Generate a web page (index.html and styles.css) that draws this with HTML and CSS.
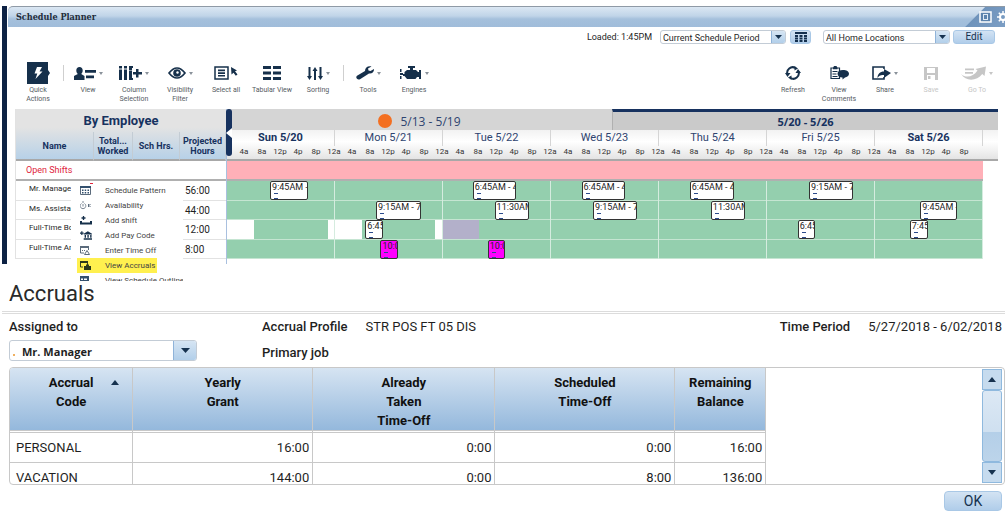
FILE: index.html
```html
<!DOCTYPE html>
<html lang="en">
<head>
<meta charset="utf-8">
<title>Schedule Planner</title>
<link rel="stylesheet" href="styles.css">
</head>
<body>
<section class="planner">
  <header class="titlebar">
    <h1 class="titlebar-text">Schedule Planner</h1>
    <div class="titlebar-tools">
      <button class="tool-btn" aria-label="Maximize"><svg width="13" height="12" viewBox="0 0 13 12"><rect x="1" y="1" width="11" height="10" fill="#5c83ad" stroke="#fff" stroke-width="1.5"/><rect x="4.5" y="3.5" width="4" height="5" fill="none" stroke="#dfeaf5"/></svg></button>
      <button class="tool-btn" aria-label="Settings"><svg width="12" height="12" viewBox="0 0 12 12"><circle cx="6" cy="6" r="3" fill="none" stroke="#fff" stroke-width="2"/><path d="M6 0v3M6 9v3M0 6h3M9 6h3M1.8 1.8l2 2M8.200 8.200l2 2M10.200 1.800l-2 2M3.800 8.200l-2 2" stroke="#fff" stroke-width="1.500"/></svg></button>
    </div>
  </header>

  <div class="filters">
    <span class="loaded">Loaded: 1:45PM</span>
    <div class="combo combo-small">
      <select class="combo-select" aria-label="Schedule period"><option>Current Schedule Period</option></select>
      <span class="combo-arrow"><svg width="7" height="4" viewBox="0 0 7 4"><path d="M0 0h7L3.500 4z" fill="#16324f"/></svg></span>
    </div>
    <button class="btn calendar-btn" aria-label="Select dates"><svg width="12" height="10" viewBox="0 0 12 10"><path d="M0 0h12v2H0zM0 3h3v2H0zM4.500 3h3v2h-3zM9 3h3v2H9zM0 5.500h3v2H0zM4.500 5.500h3v2h-3zM9 5.500h3v2H9zM0 8h3v2H0zM4.500 8h3v2h-3zM9 8h3v2H9z" fill="#14304f"/></svg></button>
    <div class="combo combo-small combo-locations">
      <select class="combo-select" aria-label="Locations"><option>All Home Locations</option></select>
      <span class="combo-arrow"><svg width="7" height="4" viewBox="0 0 7 4"><path d="M0 0h7L3.500 4z" fill="#16324f"/></svg></span>
    </div>
    <button class="btn edit-btn">Edit</button>
  </div>

  <nav class="toolbar">
    <button class="tool"><span class="tool-icon"><svg width="23" height="22" viewBox="0 0 23 22"><path d="M0 0h21v8l2 3-2 3v8H0z" fill="#16304b"/><path d="M10 5h5l-2.500 4.500h3L8.500 17l1.800-5.500H7.500z" fill="#fff"/></svg></span><span class="tool-label">Quick<br>Actions</span></button>
    <span class="divider"></span>
    <button class="tool"><span class="tool-icon"><svg width="22" height="13" viewBox="0 0 22 13"><path d="M5.500 0C7.500 0 8.700 1.500 8.700 3.500c0 1.500-.6 2.800-1.500 3.400L10.500 9V13H0V9l3.800-2.100C2.900 6.300 2.300 5 2.300 3.500 2.300 1.500 3.500 0 5.500 0zM11 3h11v2.800H11zM12 8.500h8v2.800h-8z" fill="#16304b"/></svg><svg class="caret" width="4" height="3" viewBox="0 0 4 3"><path d="M0 0h4L2 3z" fill="#8a929a"/></svg></span><span class="tool-label">View</span></button>
    <button class="tool"><span class="tool-icon"><svg width="23" height="14" viewBox="0 0 23 14"><path d="M0 0h3v2.500H0zM0 3.500h3V14H0zM5 0h3v2.500H5zM5 3.500h3V14H5zM10 0h4v2h-1v2.500h-3zM10 5h3v7h1v2h-4zM17 3h2.500v3H23v2.500h-3.500v3H17v-3h-3V6h3z" fill="#16304b"/></svg><svg class="caret" width="4" height="3" viewBox="0 0 4 3"><path d="M0 0h4L2 3z" fill="#8a929a"/></svg></span><span class="tool-label">Column<br>Selection</span></button>
    <button class="tool"><span class="tool-icon"><svg width="18" height="12" viewBox="0 0 18 12"><path d="M1 6Q5 1 9 1t8 5q-4 5-8 5T1 6z" fill="#fff" stroke="#16304b" stroke-width="1.700"/><circle cx="9" cy="6" r="3.800" fill="#16304b"/><circle cx="9.500" cy="5.500" r="1.200" fill="#fff"/></svg><svg class="caret" width="4" height="3" viewBox="0 0 4 3"><path d="M0 0h4L2 3z" fill="#8a929a"/></svg></span><span class="tool-label">Visibility<br>Filter</span></button>
    <button class="tool"><span class="tool-icon"><svg width="24" height="14" viewBox="0 0 24 14"><rect x="1" y="1" width="13" height="12" fill="#fff" stroke="#16304b" stroke-width="1.500"/><path d="M4 3.500h7v1.700H4zM4 6.200h7v1.700H4zM4 8.900h7v1.700H4zM17 1l6 3.500-2 .8 2.500 3.200-1.700 1.300-2.300-3L17.500 8.500z" fill="#16304b"/></svg></span><span class="tool-label">Select all</span></button>
    <button class="tool"><span class="tool-icon"><svg width="18" height="14" viewBox="0 0 18 14"><path d="M0 0h8v3H0zM10 0h8v3h-8zM0 5.500h8v3H0zM10 5.500h8v3h-8zM0 11h8v3H0zM10 11h8v3h-8z" fill="#16304b"/></svg></span><span class="tool-label">Tabular View</span></button>
    <button class="tool"><span class="tool-icon"><svg width="16" height="13" viewBox="0 0 16 13"><path d="M1.500 0h2v9H5l-2.500 4L0 9h1.500zM7 13V4H5.500L8 0l2.500 4H9v9zM12.500 0h2v9H16l-2.500 4L11 9h1.500z" fill="#16304b"/></svg><svg class="caret" width="4" height="3" viewBox="0 0 4 3"><path d="M0 0h4L2 3z" fill="#8a929a"/></svg></span><span class="tool-label">Sorting</span></button>
    <span class="divider"></span>
    <button class="tool"><span class="tool-icon"><svg width="18" height="14" viewBox="0 0 18 14"><path d="M15.500.5L12 2.500l.5 2 2 .5L18 3c.3 2.500-1.500 5-5 4.500L4 13.200C1.500 14.500-1 11.500 1 9.800L9 5C9 1.500 12-.5 15.500.5z" fill="#16304b"/></svg><svg class="caret" width="4" height="3" viewBox="0 0 4 3"><path d="M0 0h4L2 3z" fill="#8a929a"/></svg></span><span class="tool-label">Tools</span></button>
    <button class="tool"><span class="tool-icon"><svg width="22" height="14" viewBox="0 0 22 14"><path d="M8 0h7v2h-2v2h3l2 2h1V4h2v9h-2v-2h-2l-1.500 2H7l-2.500-3H3V8h1.500V6L7 4h3V2H8zM0 3h1.500v3H0zM0 7h3v2H0zM0 10h1.500v3H0z" fill="#16304b"/></svg><svg class="caret" width="4" height="3" viewBox="0 0 4 3"><path d="M0 0h4L2 3z" fill="#8a929a"/></svg></span><span class="tool-label">Engines</span></button>
    <span class="spacer"></span>
    <button class="tool"><span class="tool-icon"><svg width="16" height="14" viewBox="0 0 16 14"><path d="M2.500 8.500A5.500 5.500 0 0 1 10.500 2M13.500 5.500A5.500 5.500 0 0 1 5.500 12" fill="none" stroke="#16304b" stroke-width="2"/><path d="M0 7h5.500L2.500 11zM10.500 7H16l-3-4zM9.500 0l3.500 2.500-3.500 2zM6.500 14L3 11.500l3.500-2z" fill="#16304b"/></svg></span><span class="tool-label">Refresh</span></button>
    <button class="tool"><span class="tool-icon"><svg width="19" height="14" viewBox="0 0 19 14"><path d="M1 2h8.500v10.500H1z" fill="#fff" stroke="#16304b" stroke-width="1.200"/><path d="M3 2l1-2h2.500l1 2v1.200H3zM2.500 5h5v1h-5zM2.500 7.500h4v1h-4zM2.500 10h5v1h-5z" fill="#16304b"/><path d="M13 4c3.500 0 6 1.500 6 3.800s-2 3.400-4 3.800l-2.500 2v-2C9.500 11.500 7.500 10 7.500 7.800S9.500 4 13 4z" fill="#16304b"/></svg></span><span class="tool-label">View<br>Comments</span></button>
    <button class="tool"><span class="tool-icon"><svg width="19" height="14" viewBox="0 0 19 14"><path d="M12 3V1H1v12h11v-2" fill="none" stroke="#16304b" stroke-width="1.600"/><path d="M12 3l7 4-7 5V9C9 8.500 7 9.500 5.500 12 5.500 8 8 5.500 12 5.500z" fill="#16304b"/></svg><svg class="caret" width="4" height="3" viewBox="0 0 4 3"><path d="M0 0h4L2 3z" fill="#8a929a"/></svg></span><span class="tool-label">Share</span></button>
    <button class="tool tool-off" disabled><span class="tool-icon"><svg width="14" height="13" viewBox="0 0 14 13"><path d="M0 0h14v13H0z" fill="#c6c6c6"/><path d="M3 1h8v5H3zM3 8h8v5H3z" fill="#fff"/><path d="M4 9h2.500v3H4z" fill="#c6c6c6"/></svg></span><span class="tool-label">Save</span></button>
    <button class="tool tool-off" disabled><span class="tool-icon"><svg width="25" height="14" viewBox="0 0 25 14"><path d="M4 2.500h9v1.700H4zM4 6h8v1.700H4zM0 8c5 4.500 12 3 16.500-3.500L14.500 3 25 .5 23.500 10l-2.300-2C16 15 5 16 0 8z" fill="#c6c6c6"/></svg><svg class="caret" width="4" height="3" viewBox="0 0 4 3"><path d="M0 0h4L2 3z" fill="#c6c6c6"/></svg></span><span class="tool-label">Go To</span></button>
  </nav>

  <div class="schedule">
    <div class="people">
      <table class="people-table">
        <colgroup><col class="col-name"><col class="col-total"><col class="col-sch"><col class="col-proj"></colgroup>
        <thead>
          <tr class="group-row"><th colspan="4">By Employee</th></tr>
          <tr class="head-row"><th>Name</th><th>Total...<br>Worked</th><th>Sch Hrs.</th><th>Projected<br>Hours</th></tr>
        </thead>
        <tbody>
          <tr class="open-row"><td colspan="4">Open Shifts</td></tr>
          <tr><td class="person">Mr. Manage</td><td></td><td></td><td class="hours">56:00</td></tr>
          <tr><td class="person">Ms. Assistar</td><td></td><td></td><td class="hours">44:00</td></tr>
          <tr><td class="person">Full-Time Bc</td><td></td><td></td><td class="hours">12:00</td></tr>
          <tr><td class="person">Full-Time Ar</td><td></td><td></td><td class="hours">8:00</td></tr>
        </tbody>
      </table>
      <div class="menu">
        <button class="menu-item"><svg width="12" height="9" viewBox="0 0 12 9"><path d="M.5.5h10v8H.5z" fill="#fff" stroke="#5b6b7c"/><path d="M0 0h11v2H0zM2 3.500h1.500V5H2zM4.700 3.500h1.500V5H4.700zM7.500 3.500H9V5H7.500zM2 6h1.500v1.500H2zM4.700 6h1.500v1.500H4.700zM7.500 6H9v1.500H7.500z" fill="#33506e"/></svg><span class="menu-text">Schedule Pattern</span></button>
        <button class="menu-item"><svg width="12" height="9" viewBox="0 0 12 9"><path d="M2 1h2M4.500 2.500a2.800 2.800 0 1 1-3 0M3 3v2.500" fill="none" stroke="#7b8794"/><path d="M8.500 3v3M10.500 3L9 4.500 10.500 6" fill="none" stroke="#5b6b7c"/></svg><span class="menu-text">Availability</span></button>
        <button class="menu-item"><svg width="12" height="9" viewBox="0 0 12 9"><path d="M3.500 0v4M1.500 2h4" stroke="#16304b" stroke-width="1.300"/><path d="M0 5h2v1.500h8V5h2v3.500H0z" fill="#16304b"/></svg><span class="menu-text">Add shift</span></button>
        <button class="menu-item"><svg width="13" height="9" viewBox="0 0 13 9"><path d="M2 0v4M0 2h4" stroke="#16304b" stroke-width="1.300"/><path d="M8.500 0L13 2.500v1H4v-1zM5 4h1.500v3H5zM8 4h1.500v3H8zM11 4h1.500v3H11zM4 7.500h9V9H4z" fill="#16304b"/></svg><span class="menu-text">Add Pay Code</span></button>
        <button class="menu-item"><svg width="12" height="9" viewBox="0 0 12 9"><path d="M.5 1.500h8V4M.5 1.500V7H4" fill="none" stroke="#5b6b7c"/><path d="M0 0h9v2H0zM2 4h1v1H2zM4 4h1v1H4z" fill="#5b6b7c"/><path d="M4.500 8.500l2.500-4 2.500 4z" fill="none" stroke="#5b6b7c"/></svg><span class="menu-text">Enter Time Off</span></button>
        <button class="menu-item menu-item-on"><svg width="12" height="9" viewBox="0 0 12 9"><path d="M.5 1.500h7V4M.5 1.500V6H3" fill="none" stroke="#3b4620"/><path d="M0 0h8v2H0zM4 5h2V3.500h3V5h2v4H4z" fill="#2c3a1c"/></svg><span class="menu-text">View Accruals</span></button>
        <button class="menu-item"><svg width="12" height="9" viewBox="0 0 12 9"><path d="M0 0h9v9H0z" fill="#33506e"/><path d="M1 2.500h2V4H1zM4 2.500h3V4H4z" fill="#fff"/></svg><span class="menu-text">View Schedule Outline</span></button>
      </div>
    </div>

    <div class="calendar">
      <div class="splitter"><svg width="6" height="10" viewBox="0 0 6 10"><path d="M6 0v10L0 5z" fill="#fff"/></svg></div>
      <div class="periods">
        <div class="period"><span class="dot"></span>5/13 - 5/19</div>
        <div class="period period-current">5/20 - 5/26</div>
      </div>
      <div class="dates">
        <div class="days"><b>Sun 5/20</b><span>Mon 5/21</span><span>Tue 5/22</span><span>Wed 5/23</span><span>Thu 5/24</span><span>Fri 5/25</span><b>Sat 5/26</b></div>
        <div class="ticks">
          <span>4a</span><span>8a</span><span>12p</span><span>4p</span><span>8p</span><span>12a</span><span>4a</span><span>8a</span><span>12p</span><span>4p</span><span>8p</span><span>12a</span><span>4a</span><span>8a</span><span>12p</span><span>4p</span><span>8p</span><span>12a</span><span>4a</span><span>8a</span><span>12p</span><span>4p</span><span>8p</span><span>12a</span><span>4a</span><span>8a</span><span>12p</span><span>4p</span><span>8p</span><span>12a</span><span>4a</span><span>8a</span><span>12p</span><span>4p</span><span>8p</span><span>12a</span><span>4a</span><span>8a</span><span>12p</span><span>4p</span><span>8p</span>
        </div>
      </div>
      <div class="lanes">
        <div class="lane lane-open"></div>
        <div class="lane">
          <div class="shift" style="left:5.7%;width:5%">9:45AM -</div>
          <div class="shift" style="left:32.5%;width:5.7%">6:45AM - 4</div>
          <div class="shift" style="left:46.9%;width:5.8%">6:45AM - 4</div>
          <div class="shift" style="left:61.2%;width:5.8%">6:45AM - 4</div>
          <div class="shift" style="left:77%;width:5.8%">9:15AM - 7</div>
        </div>
        <div class="lane">
          <div class="shift" style="left:19.7%;width:5.9%">9:15AM - 7</div>
          <div class="shift" style="left:35.4%;width:4.6%">11:30AM</div>
          <div class="shift" style="left:48.4%;width:5.8%">9:15AM - 7</div>
          <div class="shift" style="left:64%;width:4.5%">11:30AM</div>
          <div class="shift" style="left:91.7%;width:4.9%">9:45AM -</div>
        </div>
        <div class="lane">
          <div class="block" style="left:0;width:3.6%"></div>
          <div class="block" style="left:13.3%;width:4.6%"></div>
          <div class="block" style="left:27.5%;width:1.1%"></div>
          <div class="block block-away" style="left:28.6%;width:4.7%"></div>
          <div class="shift" style="left:18.3%;width:2.3%">6:45</div>
          <div class="shift" style="left:75.5%;width:2.3%">6:45</div>
          <div class="shift" style="left:90.3%;width:2.4%">7:45</div>
        </div>
        <div class="lane">
          <div class="shift shift-alert" style="left:20.3%;width:2.3%">10:0</div>
          <div class="shift shift-alert" style="left:34.5%;width:2.3%">10:0</div>
        </div>
        <div class="gridlines"><i></i><i></i><i></i><i></i><i></i><i></i><i></i></div>
      </div>
    </div>
  </div>
</section>

<section class="accruals">
  <h2 class="accruals-title">Accruals</h2>
  <div class="details">
    <div class="assigned">
      <label class="field-name" for="employee">Assigned to</label>
      <div class="combo combo-large">
        <span class="mark"></span>
        <select class="combo-select" id="employee"><option>Mr. Manager</option></select>
        <span class="combo-arrow"><svg width="9" height="5" viewBox="0 0 9 5"><path d="M0 0h9L4.500 5z" fill="#16324f"/></svg></span>
      </div>
    </div>
    <div class="profile">
      <p class="pair"><span class="field-name">Accrual Profile</span><span>STR POS FT 05 DIS</span></p>
      <p class="pair"><span class="field-name">Primary job</span></p>
    </div>
    <p class="pair"><span class="field-name">Time Period</span><span>5/27/2018 - 6/02/2018</span></p>
  </div>

  <div class="balance">
    <div class="balance-view">
      <table class="balance-table">
        <colgroup><col class="col-code"><col class="col-grant"><col class="col-taken"><col class="col-off"><col class="col-left"></colgroup>
        <thead><tr>
          <th><span class="sort-head">Accrual<br>Code<svg class="sort" width="8" height="5" viewBox="0 0 8 5"><path d="M0 5h8L4 0z" fill="#16324f"/></svg></span></th>
          <th>Yearly<br>Grant</th><th>Already<br>Taken<br>Time-Off</th><th>Scheduled<br>Time-Off</th><th>Remaining<br>Balance</th>
        </tr></thead>
        <tbody>
          <tr><td>PERSONAL</td><td>16:00</td><td>0:00</td><td>0:00</td><td>16:00</td></tr>
          <tr><td>VACATION</td><td>144:00</td><td>0:00</td><td>8:00</td><td>136:00</td></tr>
        </tbody>
      </table>
    </div>
    <div class="scroller">
      <button class="scroll-btn" aria-label="Scroll up"><svg width="8" height="5" viewBox="0 0 8 5"><path d="M0 5h8L4 0z" fill="#16324f"/></svg></button>
      <div class="scroll-thumb"></div>
      <button class="scroll-btn" aria-label="Scroll down"><svg width="8" height="5" viewBox="0 0 8 5"><path d="M0 0h8L4 5z" fill="#16324f"/></svg></button>
    </div>
  </div>
  <div class="actions"><button class="btn ok-btn">OK</button></div>
</section>
</body>
</html>
```
FILE: styles.css
```css
* { box-sizing: border-box; }
body { margin: 0; padding-top: 6px; background: #fff; color: #1f1f1f; font-family: Roboto, sans-serif; overflow: hidden; }
button { margin: 0; padding: 0; border: 0; background: none; font: inherit; color: inherit; }
h1, h2, p { margin: 0; }
table { border-collapse: separate; border-spacing: 0; table-layout: fixed; }
svg { display: block; flex: none; }

/* Planner window */
.planner { margin-left: 2px; border-left: 5px solid #0d2244; }
.titlebar { display: flex; align-items: center; justify-content: space-between; height: 21px; margin-left: 1px; border-top: 1px solid #8f9aa6; border-top-left-radius: 5px; background: linear-gradient(#dbe7f3, #c0d4e8 45%, #a5c0dc 60%, #a0bcda); overflow: hidden; }
.titlebar-text { padding-left: 8px; font: bold 9px/18px "DejaVu Serif Condensed", "DejaVu Serif", serif; color: #222c3a; }
.titlebar-tools { display: flex; align-items: center; gap: 5px; height: 20px; padding-left: 20px; margin-right: -4px; background: linear-gradient(135deg, transparent 18px, #6f93bb 19px, #7d9fc5); }

.combo { position: relative; display: flex; border: 1px solid #c3ccd6; border-radius: 3px; overflow: hidden; background: #fff; }
.combo-select { flex: 1; min-width: 0; padding: 0 2px; border: 0; background: none; appearance: none; font: inherit; color: inherit; }
.combo-arrow { display: flex; align-items: center; justify-content: center; border-left: 1px solid #8fb3d9; background: linear-gradient(#d6e5f3, #b2cfea); }
.btn { display: flex; align-items: center; justify-content: center; border: 1px solid #a9c8e6; border-radius: 3px; background: linear-gradient(#d3e3f3, #b0cdea); color: #16324f; }

.filters { display: flex; justify-content: flex-end; align-items: stretch; height: 14px; margin: 3px 10px 0 0; font-size: 9px; line-height: 14px; }
.loaded { margin-right: 8px; }
.combo-small { width: 126px; }
.combo-small .combo-arrow { width: 14px; }
.calendar-btn { width: 21px; margin: 0 12px 0 4px; }
.combo-locations { width: 127px; margin-right: 3px; }
.edit-btn { width: 42px; font-size: 10px; }

.toolbar { display: flex; align-items: flex-start; height: 49px; margin-top: 16px; padding: 0 5px 0 8px; }
.tool { display: flex; flex-direction: column; align-items: center; width: 46px; }
.tool-icon { display: flex; align-items: center; gap: 3px; height: 26px; }
.tool-label { font-size: 7px; line-height: 9px; color: #555c63; white-space: nowrap; }
.tool-off .tool-label { color: #c6c6c6; }
.divider { width: 1px; height: 16px; margin: 5px 1px 0 2px; background: #cfcfcf; }
.spacer { flex: 1; }

/* Schedule grid */
.schedule { display: flex; padding: 0 7px 0 8px; }
.people { position: relative; width: 212px; height: 155px; border-right: 1px solid #a9c0df; }
.people-table { width: 100%; background: #fff; border-left: 1px solid #e2e2e2; }
.col-name { width: 78px; }
.col-total { width: 39px; }
.col-sch { width: 47px; }
.people-table th, .people-table td { padding: 0; }
.people-table thead { background: linear-gradient(#e3e3e3 35%, #b4d0e8); color: #17325f; }
.group-row th { height: 23px; font-size: 13px; line-height: 23px; }
.head-row th { height: 29px; border-right: 1px solid #c3ccd4; border-bottom: 2px solid #a8a8a8; font-size: 9px; line-height: 10px; }
.people-table .open-row td { height: 20px; padding-left: 10px; border-bottom: 2px solid #b0b0b0; font-size: 9px; line-height: 18px; color: #e0243c; }
.people-table tbody tr { height: 19px; }
.people-table tbody tr:nth-child(even) { height: 20px; }
.person, .hours { border-bottom: 1px solid #e2e2e2; white-space: nowrap; }
.people-table .person { padding-left: 13px; font-size: 8px; line-height: 16px; vertical-align: top; }
.people-table .hours { padding-left: 5px; font-size: 10px; line-height: 17px; }

.menu { position: absolute; top: 74px; left: 56px; z-index: 2; width: 112px; height: 98px; padding-left: 6px; background: #fff; overflow: hidden; }
.menu::before { content: ""; position: absolute; left: 19px; top: 0; width: 3px; height: 1px; background: #e0243c; }
.menu-item { display: flex; align-items: center; gap: 13px; width: 80px; height: 15px; padding-left: 3px; font-size: 8px; line-height: 13px; color: #444; text-align: left; white-space: nowrap; }
.menu-item svg { width: 12px; }
.menu-item-on { background: #fff04f; }

.calendar { position: relative; flex: 1; min-width: 0; }
.splitter { position: absolute; left: -1px; top: 0; z-index: 1; display: flex; align-items: center; width: 6px; height: 47px; border-radius: 3px; background: #17325f; }
.periods { display: flex; height: 21px; font: 12px/21px "Open Sans", sans-serif; color: #2e4470; }
.period { display: flex; align-items: center; justify-content: center; gap: 8px; flex: 1; padding-top: 3px; background: #d5d5d5; }
.period-current { padding-top: 0; border-top: 3px solid #17325f; border-left: 1px solid #b0b0b0; background: #cacaca; font-weight: bold; color: #17325f; font-size: 11px; }
.dot { width: 14px; height: 14px; border-radius: 50%; background: #f36f21; }
.dates { height: 31px; padding-right: 15px; background: linear-gradient(#f2f2f2, #fff 40%, #e4e4e4); border-bottom: 2px solid #a8a8a8; }
.days { display: flex; font-size: 11px; line-height: 16px; color: #2e4470; }
.days > * { flex: 1; text-align: center; border-right: 1px solid #d5d5d5; }
.days b { color: #17325f; }
.ticks { display: flex; padding: 0 10px 0 8px; font-size: 8px; line-height: 11px; color: #333; }
.ticks span { flex: 1; width: 0; display: flex; justify-content: center; }
.lanes { position: relative; margin-right: 15px; }
.lane { position: relative; height: 19px; background: #94cfae; border-bottom: 1px solid #c5e5d2; }
.lane:nth-child(even) { height: 20px; }
.lane-open { height: 20px; background: #ffb0b8; border-bottom: 2px solid #b0b0b0; }
.shift { position: absolute; top: 0; z-index: 1; height: 19px; padding-left: 1px; border: 1px solid #333; border-radius: 2px; background: #fff; font-size: 9px; line-height: 11px; color: #222; white-space: nowrap; overflow: hidden; }
.shift::after { content: ""; display: block; width: 4px; height: 4px; margin-left: 2px; border: solid #2b4b8c; border-width: 1px 0; }
.shift-alert { background: #f0f; }
.block { position: absolute; top: 0; bottom: 0; background: #fff; }
.block-away { background: #b3b0ca; }
.gridlines { position: absolute; inset: 20px 0 0 0; display: flex; }
.gridlines i { flex: 1; border-right: 1px solid #d5ecdf; }

/* Accruals panel */
.accruals { padding-top: 16px; font-size: 13px; }
.accruals-title { height: 34px; margin-left: 2px; padding-left: 7px; border-bottom: 3px double #dcdcdc; font-size: 22px; font-weight: 400; line-height: 28px; color: #2a2a2a; }
.details { display: flex; align-items: flex-start; padding: 0 3px 0 9px; line-height: 26px; }
.field-name { display: block; font-weight: 500; }
.assigned { width: 188px; margin-right: 65px; }
.profile { flex: 1; }
.pair { display: flex; gap: 18px; white-space: nowrap; }
.combo-large { height: 21px; padding-left: 10px; font: bold 11px "Open Sans", sans-serif; }
.combo-large .combo-select { padding-top: 2px; }
.combo-large .combo-arrow { width: 23px; }
.mark { position: absolute; left: 3px; bottom: 4px; width: 2px; height: 2px; background: #f0b060; }

.balance { display: flex; height: 118px; margin: 1px 0 6px 9px; border: 1px solid #c8c8c8; border-radius: 4px; overflow: hidden; }
.balance-view { flex: 1; overflow: hidden; }
.balance-table { width: 77.8%; line-height: 19px; }
.col-code { width: 16.3%; }
.col-grant, .col-off { width: 23.8%; }
.col-taken { width: 24.1%; }
.balance-table th { height: 62px; padding: 5px 0 0; border-right: 1px solid #c8c8c8; background: linear-gradient(#d6e4f2, #94b8dc); font-size: 13px; font-weight: bold; color: #111; vertical-align: top; }
.balance-table td { height: 30px; padding: 0 3px; border-right: 1px solid #c8c8c8; border-top: 1px solid #c8c8c8; text-align: right; }
.balance-table tbody tr:first-child td { height: 32px; border-top-width: 3px; border-top-style: double; }
.balance-table td:first-child { padding-left: 6px; text-align: left; }
.sort-head { position: relative; display: block; }
.sort { position: absolute; right: 13px; top: 7px; }
.scroller { display: flex; flex-direction: column; width: 22px; padding: 1px 2px 1px 0; }
.scroll-btn { display: flex; align-items: center; justify-content: center; height: 21px; border: 1px solid #8fb9de; background: #c6dbee; }
.scroll-thumb { flex: 1; border: 1px solid #8fb9de; border-radius: 3px; background: linear-gradient(#dce8f4, #cfe0f0 58%, #b4cfe8 59%, #bcd4ea); }
.actions { display: flex; justify-content: flex-end; padding-right: 3px; }
.ok-btn { width: 58px; height: 20px; border-radius: 4px; font-size: 14px; }
```
